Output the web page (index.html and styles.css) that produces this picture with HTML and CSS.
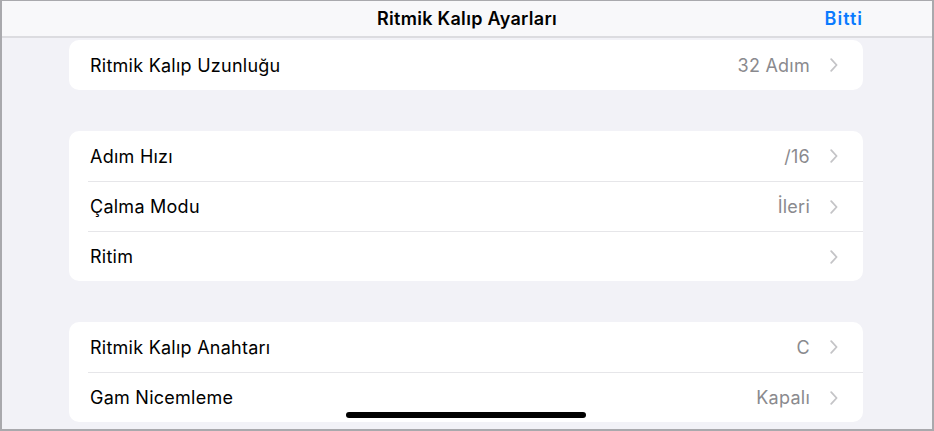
FILE: index.html
```html
<!DOCTYPE html>
<html lang="tr">
<head>
<meta charset="utf-8">
<link rel="stylesheet" href="styles.css">
</head>
<body>
<div class="frame">
  <header class="nav">
    <div class="nav-title">Ritmik Kalıp Ayarları</div>
    <div class="nav-done">Bitti</div>
  </header>
  <main class="content">
    <section class="card">
      <div class="row"><span class="label">Ritmik Kalıp Uzunluğu</span><span class="value">32 Adım</span><svg class="chev" viewBox="0 0 8 14"><path d="M1.2 1.2 L6.6 7 L1.2 12.8"/></svg></div>
    </section>
    <section class="card">
      <div class="row"><span class="label">Adım Hızı</span><span class="value">/16</span><svg class="chev" viewBox="0 0 8 14"><path d="M1.2 1.2 L6.6 7 L1.2 12.8"/></svg></div>
      <div class="row"><span class="label">Çalma Modu</span><span class="value">İleri</span><svg class="chev" viewBox="0 0 8 14"><path d="M1.2 1.2 L6.6 7 L1.2 12.8"/></svg></div>
      <div class="row"><span class="label">Ritim</span><span class="value"></span><svg class="chev" viewBox="0 0 8 14"><path d="M1.2 1.2 L6.6 7 L1.2 12.8"/></svg></div>
    </section>
    <section class="card">
      <div class="row"><span class="label">Ritmik Kalıp Anahtarı</span><span class="value">C</span><svg class="chev" viewBox="0 0 8 14"><path d="M1.2 1.2 L6.6 7 L1.2 12.8"/></svg></div>
      <div class="row"><span class="label">Gam Nicemleme</span><span class="value">Kapalı</span><svg class="chev" viewBox="0 0 8 14"><path d="M1.2 1.2 L6.6 7 L1.2 12.8"/></svg></div>
    </section>
  </main>
  <div class="home-indicator"></div>
</div>
</body>
</html>
```
FILE: styles.css
```css
html, body {
  margin: 0;
  padding: 0;
}
body {
  font-family: Inter, "Noto Sans", Roboto, sans-serif;
  color: #000;
}
.frame {
  position: relative;
  width: 934px;
  height: 431px;
  box-sizing: border-box;
  border: 2px solid #a9a9ad;
  border-top-width: 1px;
  background: #f2f2f7;
  overflow: hidden;
}
.nav {
  height: 35px;
  background: #f8f8fa;
  border-bottom: 2px solid #dcdce0;
  display: flex;
  align-items: center;
  justify-content: center;
  position: relative;
}
.nav-title {
  font-size: 18px;
  font-weight: 600;
  letter-spacing: 0.3px;
}
.nav-done {
  position: absolute;
  right: 69px;
  top: 0;
  height: 35px;
  line-height: 35px;
  font-size: 18px;
  font-weight: 600;
  color: #0a7aff;
  letter-spacing: 1px;
}
.content {
  padding: 2px 69px 0 67px;
  display: flex;
  flex-direction: column;
  gap: 41px;
}
.card {
  background: #fff;
  border-radius: 10px;
  overflow: hidden;
}
.row {
  box-sizing: border-box;
  height: 50px;
  display: flex;
  align-items: center;
  padding: 0 25px 0 21px;
  font-size: 18px;
  letter-spacing: 0.25px;
  position: relative;
}
.row + .row {
  border-top: 1px solid #e6e6e9;
  margin-left: 19px;
  padding-left: 2px;
}
.label {
  flex: 1;
}
.value {
  color: #8a8a8e;
  margin-right: 20px;
}
.chev {
  width: 8px;
  height: 14px;
  fill: none;
  stroke: #c4c4c7;
  stroke-width: 1.8;
  stroke-linecap: round;
  stroke-linejoin: round;
}
.home-indicator {
  position: absolute;
  left: 344px;
  top: 411px;
  width: 240px;
  height: 6px;
  border-radius: 3px;
  background: #000;
}
```
